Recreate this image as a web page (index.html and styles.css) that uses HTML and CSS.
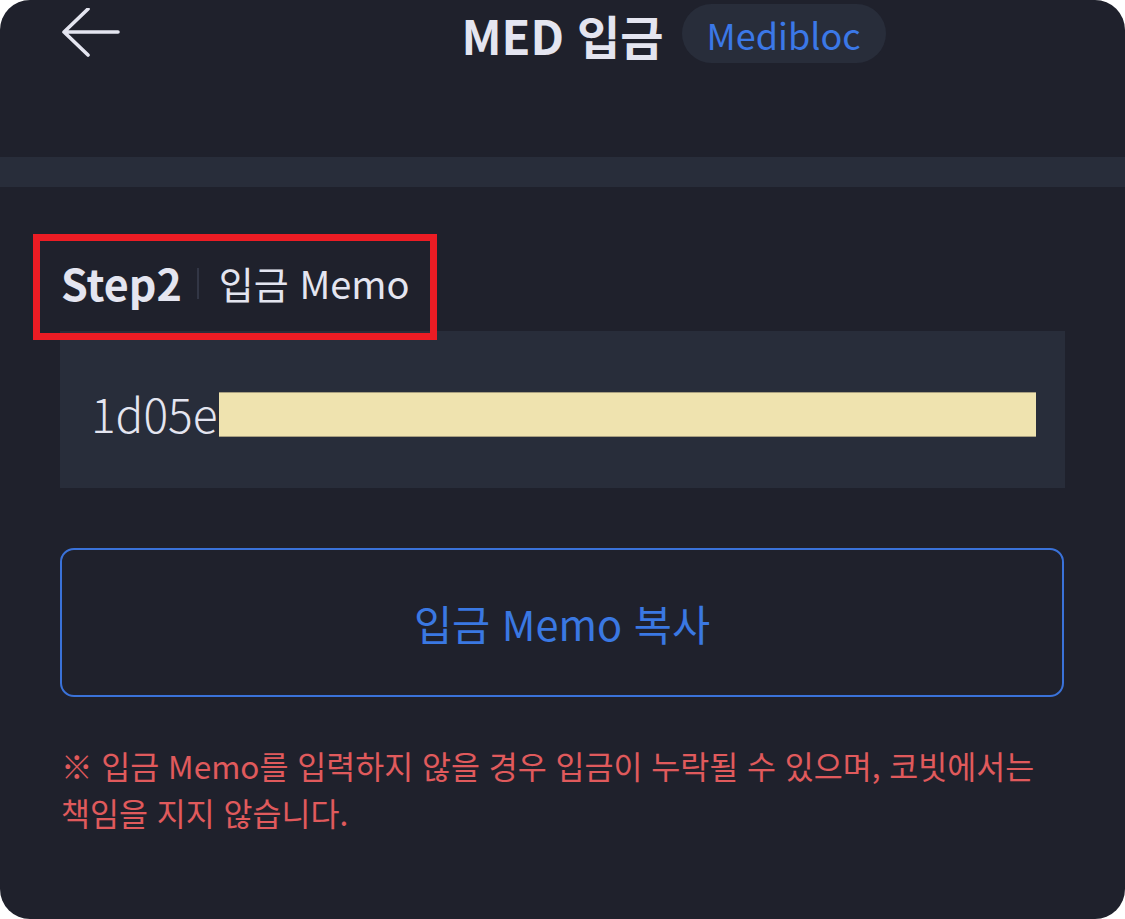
FILE: index.html
```html
<!DOCTYPE html>
<html lang="ko">
<head>
<meta charset="utf-8">
<title>MED 입금</title>
<link rel="stylesheet" href="styles.css">
</head>
<body>
<div class="screen">
  <header class="topbar">
    <div class="back">
      <svg width="60" height="52" viewBox="0 0 60 52" aria-hidden="true">
        <path d="M3 24 H57 M27 1 L3 24 L27 47" fill="none" stroke="#e4e5f0" stroke-width="3.6" stroke-linecap="round" stroke-linejoin="round"/>
      </svg>
    </div>
    <h1 class="title">MED 입금</h1>
    <div class="pill-wrap"><span class="pill">Medibloc</span></div>
  </header>
  <div class="band"></div>
  <main class="content">
    <div class="step">
      <span class="step-num">Step2</span>
      <span class="step-div"></span>
      <span class="step-name">입금 Memo</span>
    </div>
    <div class="memo-box">
      <span class="memo-text">1d05e</span>
      <span class="redact"></span>
    </div>
    <button class="copy-btn">입금 Memo 복사</button>
    <p class="warning">※ 입금 Memo를 입력하지 않을 경우 입금이 누락될 수 있으며, 코빗에서는<br>책임을 지지 않습니다.</p>
  </main>
  <div class="annot"></div>
</div>
</body>
</html>
```

FILE: styles.css
```css
html, body {
  margin: 0;
  padding: 0;
  background: #ffffff;
}

.screen {
  position: relative;
  width: 1125px;
  height: 919px;
  background: #1f212c;
  border-radius: 30px;
  overflow: hidden;
  font-family: "Noto Sans CJK KR", "Noto Sans", sans-serif;
  color: #e4e5f0;
}

.topbar {
  height: 70px;
  display: grid;
  grid-template-columns: 1fr auto 1fr;
  align-items: center;
}

.back {
  padding-left: 61px;
  display: flex;
  align-items: center;
  height: 70px;
  margin-top: -2px;
}

.title {
  margin: 0;
  font-size: 47px;
  font-weight: 700;
  line-height: 60px;
  color: #e4e5f0;
  letter-spacing: 0;
}

.pill-wrap {
  justify-self: start;
  padding-left: 18px;
  display: flex;
  align-items: center;
}

.pill {
  display: inline-flex;
  align-items: center;
  height: 59px;
  padding: 0 25px;
  border-radius: 30px;
  background: #282d3a;
  color: #3b78e7;
  font-size: 36px;
  font-weight: 400;
  margin-top: -3px;
}

.band {
  margin-top: 87px;
  height: 30px;
  background: #282d3a;
}

.content {
  padding: 69px 60px 0 60px;
}

.step {
  height: 52px;
  display: flex;
  align-items: center;
  padding-left: 1px;
}

.step-num {
  font-size: 43px;
  font-weight: 700;
  color: #e4e5f0;
}

.step-div {
  width: 2px;
  height: 31px;
  background: #323645;
  margin: 2px 20px 0 15px;
}

.step-name {
  font-size: 38px;
  font-weight: 400;
  color: #e4e5f0;
}

.memo-box {
  position: relative;
  margin-top: 23px;
  height: 157px;
  background: #282d3a;
  display: flex;
  align-items: center;
  padding-left: 31px;
}

.memo-text {
  font-size: 46px;
  font-weight: 300;
  color: #e4e5f0;
  margin-top: 6px;
}

.redact {
  position: absolute;
  left: 159px;
  top: 61px;
  width: 817px;
  height: 43px;
  background: #efe3af;
  border-top: 1px solid #a89f80;
  border-bottom: 1px solid #a89f80;
}

.copy-btn {
  display: flex;
  align-items: center;
  justify-content: center;
  box-sizing: border-box;
  width: 1004px;
  height: 149px;
  margin-top: 60px;
  background: transparent;
  border: 2px solid #3a72d9;
  border-radius: 14px;
  color: #3a78e2;
  font-family: "Noto Sans CJK KR", "Noto Sans", sans-serif;
  font-size: 41.5px;
  font-weight: 400;
  padding: 0;
}

.warning {
  margin: 45px 0 0 1px;
  font-size: 31.5px;
  line-height: 47px;
  color: #e05a5c;
}

.annot {
  position: absolute;
  left: 33px;
  top: 234px;
  width: 404px;
  height: 106px;
  box-sizing: border-box;
  border: 7px solid #ec1c24;
}
```
